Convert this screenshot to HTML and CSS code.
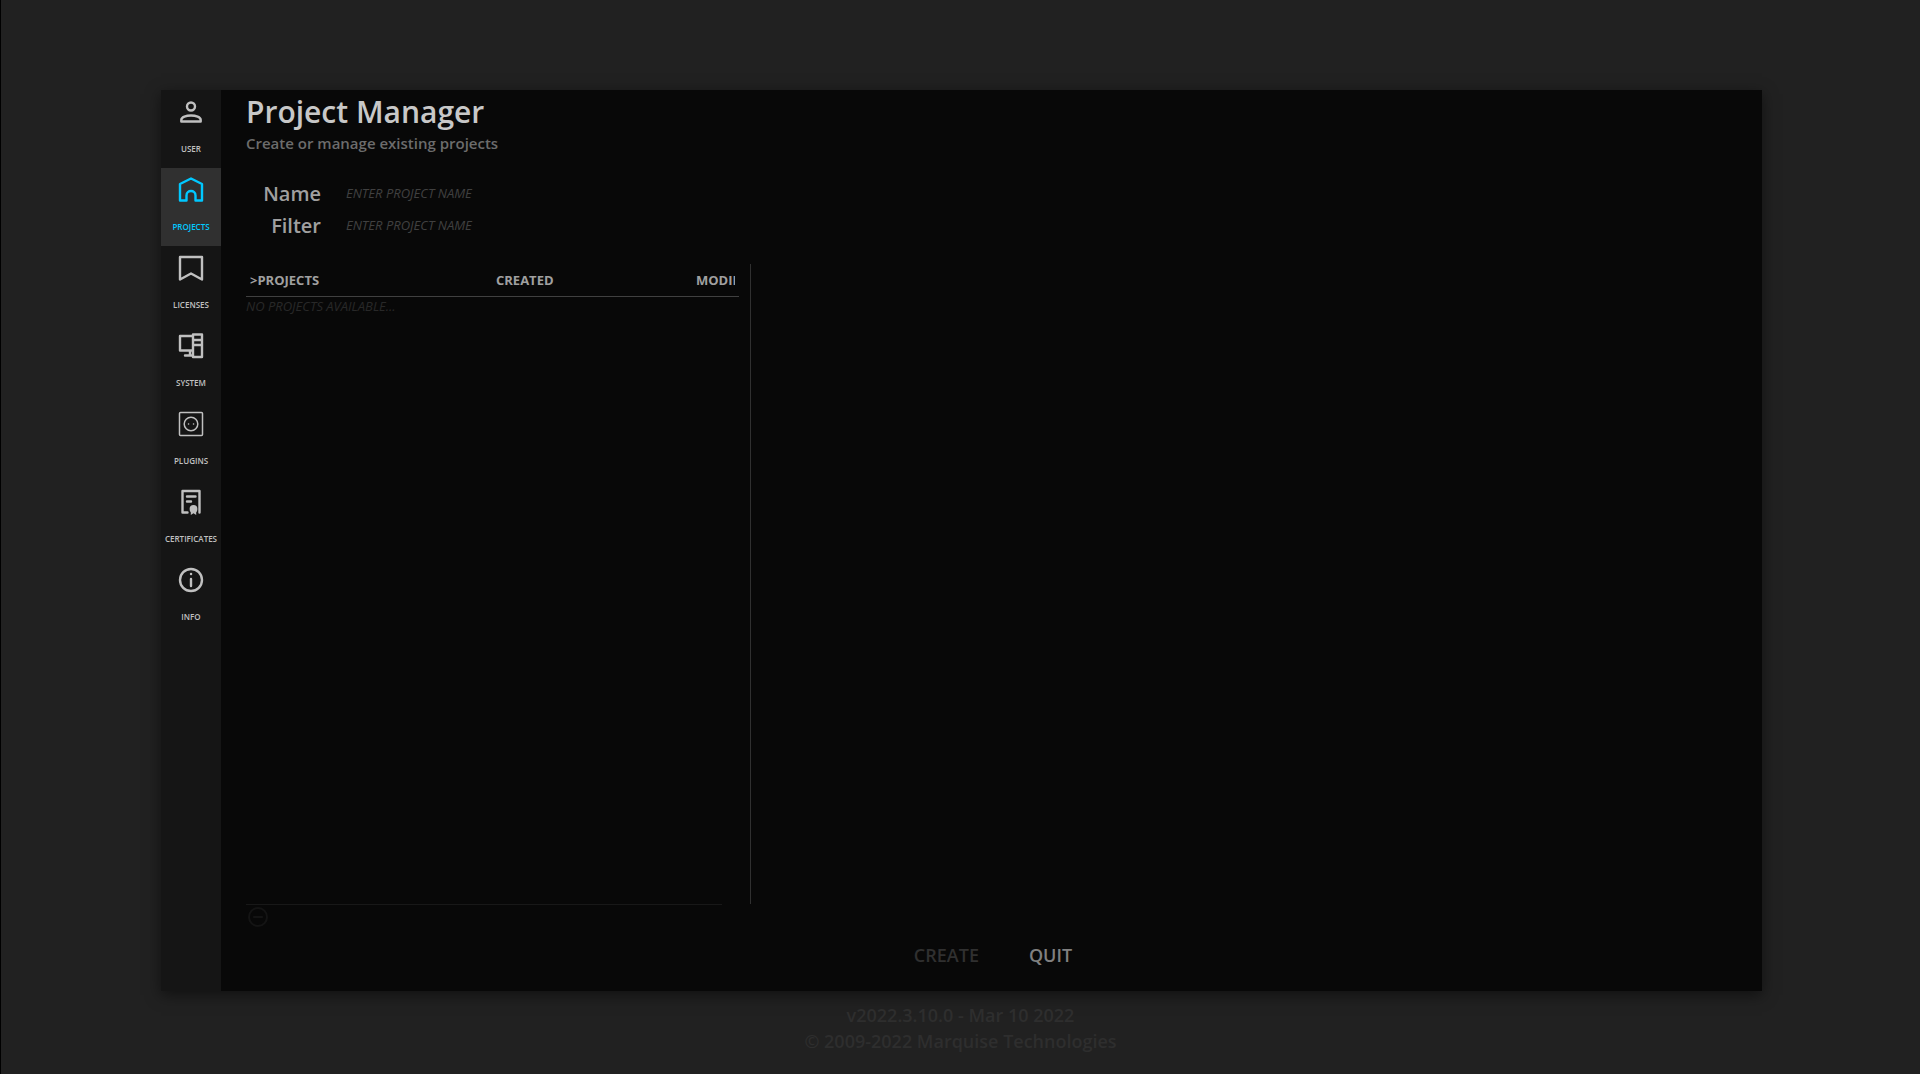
FILE: index.html
```html
<!DOCTYPE html>
<html lang="en">
<head>
    <meta charset="UTF-8">
    <meta name="viewport" content="width=device-width, initial-scale=1.0">
    <title>Project Manager</title>
    <link rel="stylesheet" href="styles.css">
</head>
<body>
    <div class="window">
        <nav class="sidebar">
            <a class="tab" href="#user">
                <svg viewBox="0 0 26 26"><circle cx="13" cy="7.500" r="4"/><path d="M3.300 22.500v-1.500c0-3 5-4.500 9.700-4.500s9.700 1.500 9.700 4.500v1.500z"/></svg>
                <span>USER</span>
            </a>
            <a class="tab active" href="#projects">
                <svg viewBox="0 0 26 26"><path d="M2 23.500V7L13 1.500l11 5.500v16.500h-6.500v-5c0-6-9-6-9 0v5z"/></svg>
                <span>PROJECTS</span>
            </a>
            <a class="tab" href="#licenses">
                <svg viewBox="0 0 26 26"><path d="M2 2h22v22.500l-11-6-11 6z"/></svg>
                <span>LICENSES</span>
            </a>
            <a class="tab" href="#system">
                <svg viewBox="0 0 26 26"><path d="M15 17.500H2V3h13M15 1.500h9V24h-9zM15 7h9M15 12h9M12 18v4.500M7 22.500h8"/></svg>
                <span>SYSTEM</span>
            </a>
            <a class="tab" href="#plugins">
                <svg class="thin" viewBox="0 0 26 26"><rect x="1.500" y="1.500" width="23" height="23" rx="1"/><circle cx="13" cy="13" r="6.800"/><path d="M10.500 13h.1M15.500 13h.1"/></svg>
                <span>PLUGINS</span>
            </a>
            <a class="tab" href="#certificates">
                <svg viewBox="0 0 26 26"><path d="M9.500 23.500H4.500V2h17v21.500M9 7.500h8.500M9 12.500h4"/><circle class="solid" cx="15.500" cy="20" r="3.900"/><path class="solid" d="M12.800 21h5.400v5l-2.700-1.800-2.700 1.800z"/></svg>
                <span>CERTIFICATES</span>
            </a>
            <a class="tab" href="#info">
                <svg viewBox="0 0 26 26"><circle cx="13" cy="13" r="11"/><path d="M13 12v7M13 7h.1"/></svg>
                <span>INFO</span>
            </a>
        </nav>

        <main class="content">
            <header>
                <h1>Project Manager</h1>
                <p class="subtitle">Create or manage existing projects</p>
            </header>

            <form class="fields">
                <label for="name">Name</label>
                <input type="text" id="name" placeholder="ENTER PROJECT NAME">
                <label for="filter">Filter</label>
                <input type="text" id="filter" placeholder="ENTER PROJECT NAME">
            </form>

            <div class="panels">
                <section class="list">
                    <table>
                        <thead>
                            <tr>
                                <th class="col-project"><span>&gt;PROJECTS</span></th>
                                <th class="col-created"><span>CREATED</span></th>
                                <th><span>MODIFIED</span></th>
                            </tr>
                        </thead>
                        <tbody>
                            <tr>
                                <td colspan="3">NO PROJECTS AVAILABLE...</td>
                            </tr>
                        </tbody>
                    </table>
                </section>
                <section class="details"></section>
            </div>

            <div class="toolbar">
                <button type="button" class="remove" aria-label="Remove project" disabled>
                    <svg viewBox="0 0 22 22"><circle cx="11" cy="11" r="9"/><path d="M7 11h8"/></svg>
                </button>
            </div>

            <div class="actions">
                <button type="button" disabled>CREATE</button>
                <button type="button">QUIT</button>
            </div>
        </main>
    </div>

    <footer>
        <p>v2022.3.10.0 - Mar 10 2022</p>
        <p>© 2009-2022 Marquise Technologies</p>
    </footer>
</body>
</html>
```
FILE: styles.css
```css
* {
    margin: 0;
    padding: 0;
    box-sizing: border-box;
}
body {
    font-family: "Open Sans", sans-serif;
    background: #212121;
    color: #c8c8c8;
    min-height: 100vh;
    display: flex;
    flex-direction: column;
    border-left: 1px solid #000;
}
button {
    font-family: inherit;
    background: none;
    border: none;
    cursor: pointer;
}
.window {
    flex: 1;
    display: flex;
    margin: 90px 158px 0 160px;
    background: #080808;
    box-shadow: 0 4px 14px rgba(0, 0, 0, 0.5);
}

/* Sidebar */
.sidebar {
    width: 60px;
    background: #151515;
}
.tab {
    display: flex;
    flex-direction: column;
    align-items: center;
    height: 78px;
    padding-top: 9px;
    color: #c0c0c0;
    font-size: 8px;
    font-weight: 600;
    line-height: 12px;
    text-decoration: none;
    white-space: nowrap;
}
.tab svg {
    width: 26px;
    height: 26px;
    margin-bottom: 18px;
}
.tab.active {
    background: #303030;
    color: #00c8ff;
}
svg {
    fill: none;
    stroke: currentColor;
    stroke-width: 2.4;
    stroke-linejoin: round;
    stroke-linecap: round;
}
.thin {
    stroke-width: 1.5;
}
.solid {
    fill: currentColor;
    stroke: none;
}

/* Main area */
.content {
    flex: 1;
    min-width: 0;
    display: flex;
    flex-direction: column;
    padding-left: 25px;
}
h1 {
    font-size: 30px;
    font-weight: 600;
    line-height: 43px;
}
.subtitle {
    color: #6c6c6c;
    font-size: 15px;
    font-weight: 600;
    line-height: 20px;
}
.fields {
    display: grid;
    grid-template-columns: 75px 300px;
    grid-auto-rows: 32px;
    column-gap: 25px;
    align-items: center;
    margin-top: 24px;
}
.fields label {
    color: #a0a0a0;
    font-size: 20px;
    font-weight: 600;
    text-align: right;
}
.fields input {
    font-family: inherit;
    font-size: 13px;
    font-style: italic;
    color: #a0a0a0;
    background: none;
    border: none;
    outline: none;
}
.fields input::placeholder {
    color: #404040;
}
.panels {
    flex: 1;
    display: flex;
    margin-top: 23px;
}
.list {
    width: 505px;
    border-right: 1px solid #303030;
}
.details {
    flex: 1;
}
table {
    width: 493px;
    table-layout: fixed;
    border-collapse: collapse;
    text-align: left;
    font-size: 13px;
}
th {
    height: 32px;
    padding: 0 4px;
    border-bottom: 1px solid #404040;
    color: #a0a0a0;
    font-weight: 700;
}
th span {
    display: block;
    overflow: hidden;
}
.col-project {
    width: 246px;
}
.col-created {
    width: 200px;
}
td {
    height: 20px;
    color: #282828;
    font-style: italic;
}
.toolbar {
    width: 476px;
    height: 25px;
    border-top: 1px solid #181818;
}
.remove {
    display: block;
    width: 24px;
    height: 24px;
    padding: 1px;
    color: #141414;
}
.remove svg {
    width: 22px;
    height: 22px;
    stroke-width: 2;
}
.actions {
    display: flex;
    justify-content: center;
    gap: 50px;
    height: 62px;
    padding: 14px 22px 24px 0;
}
.actions button {
    color: #808080;
    font-size: 18px;
    font-weight: 600;
    line-height: 24px;
}
.actions button:disabled {
    color: #303030;
}

footer {
    height: 83px;
    padding-top: 11px;
    color: #2e2e2e;
    font-size: 18px;
    font-weight: 600;
    line-height: 26px;
    text-align: center;
}
```
